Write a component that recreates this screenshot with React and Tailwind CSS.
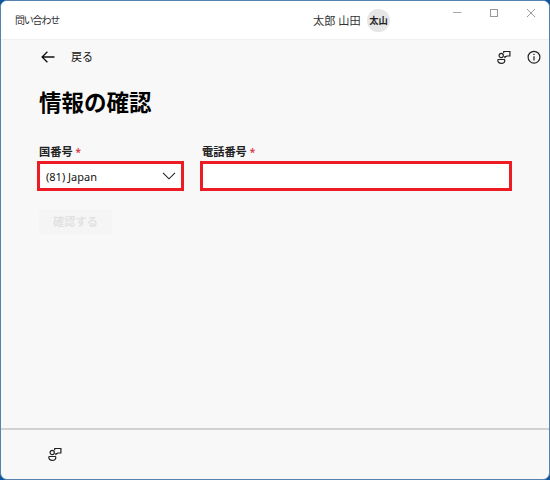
import { useState } from 'react';

function PersonFeedbackIcon() {
  return (
    <svg width="14" height="14" viewBox="0 0 14 14" fill="none" stroke="#222" strokeWidth="1.2">
      <circle cx="4.2" cy="5.5" r="2.1" />
      <path d="M1.500 9.500h5.600q.7 0 .7.700c0 2-1.300 3.200-3.500 3.200S.8 12.200.8 10.200q0-.7.700-.7z" />
      <path d="M6.700 3.300V1.500h6.200V6H9.800L7.900 7.300V5.900" />
    </svg>
  );
}

function InfoIcon() {
  return (
    <svg width="14" height="14" viewBox="0 0 14 14" fill="none" stroke="#262626" strokeWidth="1.2">
      <circle cx="7" cy="7.200" r="5.900" />
      <path d="M7 6.200v4.200M7 3.800v1.300" />
    </svg>
  );
}

function TitleBar() {
  return (
    <header className="flex h-[39px] shrink-0 border-b border-[#efefef] bg-white">
      <p className="w-[312px] pl-[14px] text-[10px] leading-[39px] tracking-[-1.2px] text-[#333]">問い合わせ</p>
      <p className="w-[54px] text-[11.2px] leading-[39px] whitespace-nowrap text-[#333]">太郎 山田</p>
      <div className="mt-2 flex size-[23px] items-center justify-center rounded-full bg-[#e6e6e6] text-[9.3px] font-bold text-[#222]">
        太山
      </div>
      <div className="mt-[6px] ml-auto flex gap-[27px] pr-[13px]">
        <svg width="10" height="12" viewBox="0 0 10 12" fill="none" stroke="#aaa">
          <path d="M1 5.500h8.500" />
        </svg>
        <svg width="10" height="12" viewBox="0 0 10 12" fill="none" stroke="#999">
          <rect x="1.500" y="2.500" width="7" height="7" />
        </svg>
        <svg width="10" height="12" viewBox="0 0 10 12" fill="none" stroke="#999">
          <path d="M1 2l8 8M9 2l-8 8" />
        </svg>
      </div>
    </header>
  );
}

export default function App() {
  const [phone, setPhone] = useState("");

  return (
    <main className="h-[480px] w-[550px] bg-[#0e559f] font-['Noto_Sans','Noto_Sans_CJK_JP',sans-serif]">
      <div className="flex h-full flex-col overflow-hidden rounded-[7px] border border-[#5583ad] bg-[#f8f8f8]">
        <TitleBar />

        <section className="flex-1">
          <nav className="flex h-[34px] items-center pr-[8px] pl-10">
            <button className="flex items-center">
              <svg width="14" height="12" viewBox="0 0 14 12" fill="none" stroke="#111" strokeWidth="1.3">
                <path d="M13.500 6H1.200M6.400.7L1.100 6l5.300 5.300" />
              </svg>
              <span className="ml-4 text-[11px] text-[#111]">戻る</span>
            </button>
            <div className="ml-auto flex gap-4">
              <PersonFeedbackIcon />
              <InfoIcon />
            </div>
          </nav>

          <h1 className="mt-3 pl-[38px] text-[22.500px] leading-[34px] font-bold text-black">情報の確認</h1>

          <div className="mt-[24px] flex gap-4 pl-9">
            <div className="w-[147px]">
              <label className="block h-[17px] pl-[2px] text-[11.2px] leading-[15px] font-semibold text-[#222]">
                国番号 <span className="text-[10px] text-[#e0303c]">*</span>
              </label>
              <button className="flex h-[30px] w-full items-center justify-between border-3 border-[#ed1c24] bg-white pr-[5px] pl-[6px] text-[11px] text-[#111]">
                <span className="pt-[2px]">(81) Japan</span>
                <svg width="14" height="8" viewBox="0 0 14 8" fill="none" stroke="#222" strokeWidth="1.1">
                  <path d="M1 .8l6 6 6-6" />
                </svg>
              </button>
            </div>
            <div className="w-[312px]">
              <label className="block h-[17px] pl-[2px] text-[11.2px] leading-[15px] font-semibold text-[#222]">
                電話番号 <span className="text-[10px] text-[#e0303c]">*</span>
              </label>
              <input
                type="text"
                value={phone}
                onChange={(e) => setPhone(e.target.value)}
                className="block h-[30px] w-full border-3 border-[#ed1c24] bg-white px-2 text-[11px] focus:outline-none"
              />
            </div>
          </div>

          <button disabled className="mt-[18px] ml-[38px] h-[26px] w-[73px] rounded-[2px] bg-[#f5f5f5] text-[11.2px] font-semibold text-[#e2e2e2]">
            確認する
          </button>
        </section>

        <footer className="h-[51px] shrink-0 border-t-2 border-[#d2d2d2] pt-[17px] pl-[47px]">
          <PersonFeedbackIcon />
        </footer>
      </div>
    </main>
  );
}
